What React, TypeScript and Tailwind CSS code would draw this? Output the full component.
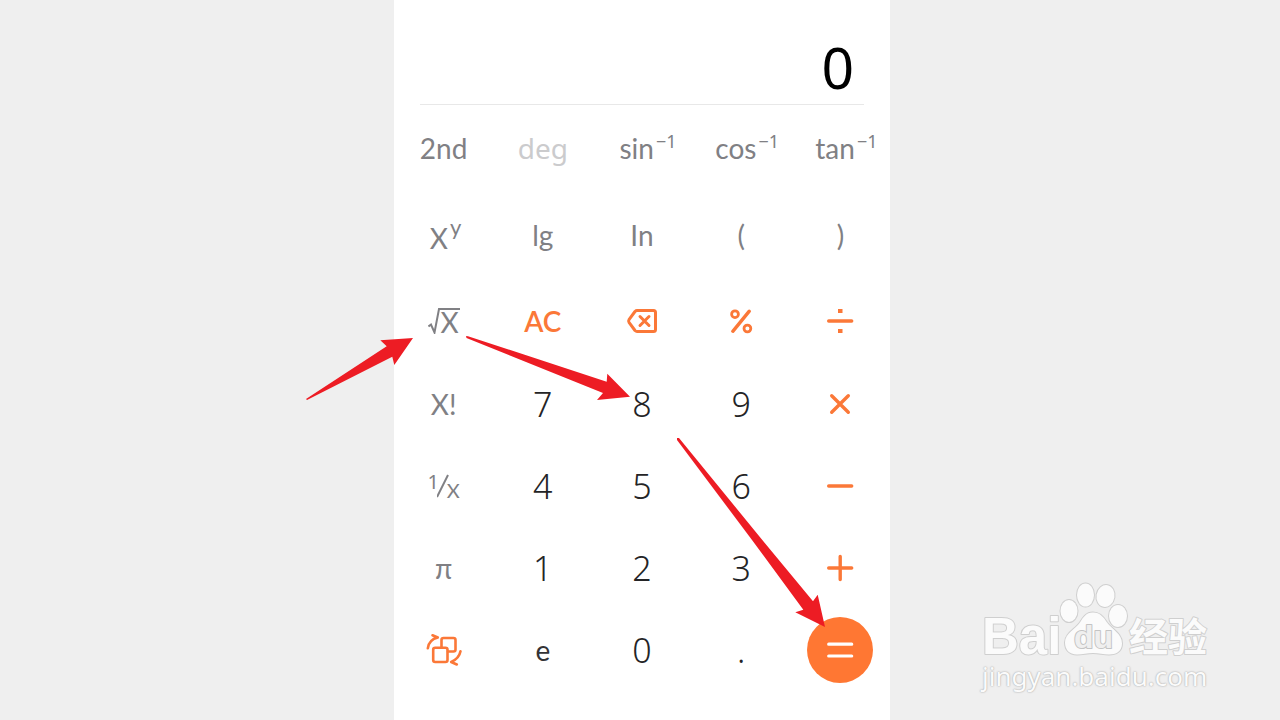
import type { ReactNode } from "react";
import { clsx } from "clsx";

type Tone = "fn" | "muted" | "digit" | "constant" | "op";

type Key = {
  label: string;
  tone: Tone;
  content?: ReactNode;
};

const tones: Record<Tone, string> = {
  fn: "font-[Lato,'Noto_Sans',sans-serif] text-[28px] text-[#808084]",
  muted: "text-[28px] leading-9 text-[#cbcbcd]",
  digit: "text-[34px] font-light text-[#242426]",
  constant: "font-[Lato,'Noto_Sans',sans-serif] text-[28px] text-[#333336]",
  op: "font-[Lato,'Noto_Sans',sans-serif] text-[28px] font-semibold text-[#fb7838]",
};

function Inverse({ name }: { name: string }) {
  return (
    <span className="pl-3 whitespace-nowrap">
      {name}
      <sup className="top-0 pl-0.5 align-[11px] font-['Noto_Sans'] text-[18px] leading-none">−1</sup>
    </span>
  );
}

function Power() {
  return (
    <span className="pt-1 pl-1">
      X<sup className="top-0 pl-0.5 align-[14px] text-[22px] leading-none">y</sup>
    </span>
  );
}

function SquareRoot() {
  return (
    <span className="flex items-end">
      <svg className="h-[26px] w-3" viewBox="0 0 12 26" fill="none" stroke="currentColor" strokeWidth="2">
        <path d="M0.5 18.5l2.5-2 3.5 8L11 1h1" />
      </svg>
      <span className="h-[26px] border-t-2 border-current px-px leading-6">X</span>
    </span>
  );
}

function Reciprocal() {
  return (
    <span className="flex leading-7">
      <span className="self-start font-['Noto_Sans'] text-[20px] leading-4">1</span>
      <svg className="-mx-0.5 h-6 w-3" viewBox="0 0 12 24" fill="none" stroke="currentColor" strokeWidth="2">
        <path d="M0 23L11 1" />
      </svg>
      <span className="self-end text-[20px] leading-4">X</span>
    </span>
  );
}

function Icon({ children, width = 3 }: { children: ReactNode; width?: number }) {
  return (
    <svg
      className="size-9"
      viewBox="0 0 36 36"
      fill="none"
      stroke="currentColor"
      strokeWidth={width}
      strokeLinecap="round"
      strokeLinejoin="round"
      aria-hidden="true"
    >
      {children}
    </svg>
  );
}

const keys: Key[] = [
  { label: "2nd", tone: "fn" },
  { label: "deg", tone: "muted" },
  { label: "arcsine", tone: "fn", content: <Inverse name="sin" /> },
  { label: "arccosine", tone: "fn", content: <Inverse name="cos" /> },
  { label: "arctangent", tone: "fn", content: <Inverse name="tan" /> },

  { label: "power", tone: "fn", content: <Power /> },
  { label: "lg", tone: "fn" },
  { label: "In", tone: "fn" },
  { label: "(", tone: "fn" },
  { label: ")", tone: "fn" },

  { label: "square root", tone: "fn", content: <SquareRoot /> },
  { label: "AC", tone: "op" },
  {
    label: "backspace",
    tone: "op",
    content: (
      <Icon>
        <path d="M13 7.5h16.5q2 0 2 2v17q0 2-2 2H13q-1 0-2-1l-6-8.2q-.8-1.3 0-2.6l6-8.2q1-1 2-1z" />
        <path d="M16 13.500l9 9m0-9l-9 9" />
      </Icon>
    ),
  },
  {
    label: "percent",
    tone: "op",
    content: (
      <Icon width={3.4}>
        <circle cx="12" cy="11.200" r="3.400" strokeWidth="2.800" />
        <circle cx="24.400" cy="25.500" r="3.400" strokeWidth="2.800" />
        <path d="M26.300 8.200L9.800 28.300" />
      </Icon>
    ),
  },
  {
    label: "divide",
    tone: "op",
    content: (
      <Icon width={3.4}>
        <path d="M6.700 18h23" />
        <path d="M16 6h4.500v4H16zM16 26h4.500v4H16z" fill="currentColor" stroke="none" />
      </Icon>
    ),
  },

  { label: "X!", tone: "fn" },
  { label: "7", tone: "digit" },
  { label: "8", tone: "digit" },
  { label: "9", tone: "digit" },
  {
    label: "multiply",
    tone: "op",
    content: (
      <Icon width={3.4}>
        <path d="M9.700 9.700l16.600 16.600m0-16.600L9.700 26.300" />
      </Icon>
    ),
  },

  { label: "reciprocal", tone: "fn", content: <Reciprocal /> },
  { label: "4", tone: "digit" },
  { label: "5", tone: "digit" },
  { label: "6", tone: "digit" },
  {
    label: "minus",
    tone: "op",
    content: (
      <Icon width={3.4}>
        <path d="M6.700 18h23" />
      </Icon>
    ),
  },

  { label: "π", tone: "fn" },
  { label: "1", tone: "digit" },
  { label: "2", tone: "digit" },
  { label: "3", tone: "digit" },
  {
    label: "plus",
    tone: "op",
    content: (
      <Icon width={3.4}>
        <path d="M6.700 18h23M18.200 6.500v23" />
      </Icon>
    ),
  },

  {
    label: "switch layout",
    tone: "op",
    content: (
      <Icon width={2.6}>
        <rect x="7.2" y="15.8" width="14.3" height="14.2" rx="2" />
        <path d="M15.500 15.500V8q0-2 2-2h10q2 0 2 2v9.500q0 2-2 2h-5.500" />
        <path d="M1.800 16.300C2.500 11 5.500 7 11.800 5.500L6.500 3.300" />
        <path d="M34.500 19.300C33.500 24.500 31 27.500 25.200 30L30.800 32.500" />
      </Icon>
    ),
  },
  { label: "e", tone: "constant" },
  { label: "0", tone: "digit" },
  { label: ".", tone: "digit" },
  {
    label: "equals",
    tone: "op",
    content: (
      <span className="flex size-[66px] items-center justify-center rounded-full bg-[#ff7733] text-white">
        <Icon width={3.2}>
          <path d="M6.700 12.200h23M6.700 24h23" />
        </Icon>
      </span>
    ),
  },
];

function Arrows() {
  return (
    <svg
      className="pointer-events-none absolute top-0 left-0 h-[720px] w-[496px] overflow-visible"
      viewBox="394 0 496 720"
      fill="#ed1c24"
      aria-hidden="true"
    >
      <path d="M306 399L386.700 346.300 380.300 340.300 413 338 394.300 365 392.300 356.700 307 400z" />
      <path d="M466 336L468 336.200 606.700 381.700 607.300 373.700 630 396.700 597 400 603 393 466.500 338z" />
      <path d="M677 438L679 438 762.300 540 813 601.300 817.700 594.700 825 627 795.300 612.300 803.300 609.700 752 540 677 440z" />
    </svg>
  );
}

function Watermark() {
  return (
    <div className="absolute right-[68px] bottom-[30px] flex flex-col text-[#fbfbfb]">
      <svg
        className="h-[82px] w-[230px] overflow-visible"
        viewBox="980 580 230 82"
        fill="currentColor"
        stroke="#cfcfcf"
        strokeWidth="2"
        strokeLinejoin="round"
        paintOrder="stroke"
        role="img"
        aria-label="Baidu 经验"
      >
        <text x="980" y="654" className="font-['Liberation_Sans'] text-[51px] font-bold">
          Bai
        </text>
        <ellipse cx="1067" cy="611" rx="8.500" ry="11" />
        <ellipse cx="1083.500" cy="595" rx="8.500" ry="11.500" />
        <ellipse cx="1103.500" cy="596" rx="9" ry="11" transform="rotate(10 1103.500 596)" />
        <ellipse cx="1116" cy="616" rx="9" ry="11" />
        <path d="M1091 612.500c7 0 11 5 14 10 5 7 15 11 15 21 0 8-6 11-13 11-6 0-10-1.500-16-1.500s-10 1.500-16 1.500c-8 0-12-5-12-12 0-9 10-13 15-20 3-5 6-10 13-10z" />
        <text x="1072" y="648" fill="#efefef" stroke="#c4c4c4" className="font-['Liberation_Sans'] text-[32px] font-bold">
          du
        </text>
        <text x="1127" y="651" className="font-['Noto_Sans_CJK_SC',sans-serif] text-[39px] font-bold">
          经验
        </text>
      </svg>
      <p className="text-[26px] leading-7 [text-shadow:0_0_2px_#aaa,0_0_1px_#bbb]">jingyan.baidu.com</p>
    </div>
  );
}

export default function App() {
  return (
    <div className="relative flex min-h-screen justify-center overflow-hidden bg-[#efefef] pl-1 font-['Noto_Sans',sans-serif]">
      <main className="relative w-full max-w-[496px] bg-white pb-7">
        <output className="mx-[26px] flex h-[105px] items-end justify-end border-b border-[#e8e8e8] pr-[10px] pb-2 text-[57px] leading-none text-black">
          0
        </output>
        <div className="grid grid-cols-5 grid-rows-[86px_88px_84px_repeat(4,82px)]">
          {keys.map((key) => (
            <button
              key={key.label}
              type="button"
              aria-label={key.label}
              className={clsx("flex items-center justify-center", tones[key.tone])}
            >
              {key.content ?? key.label}
            </button>
          ))}
        </div>
        <Arrows />
      </main>
      <Watermark />
    </div>
  );
}
